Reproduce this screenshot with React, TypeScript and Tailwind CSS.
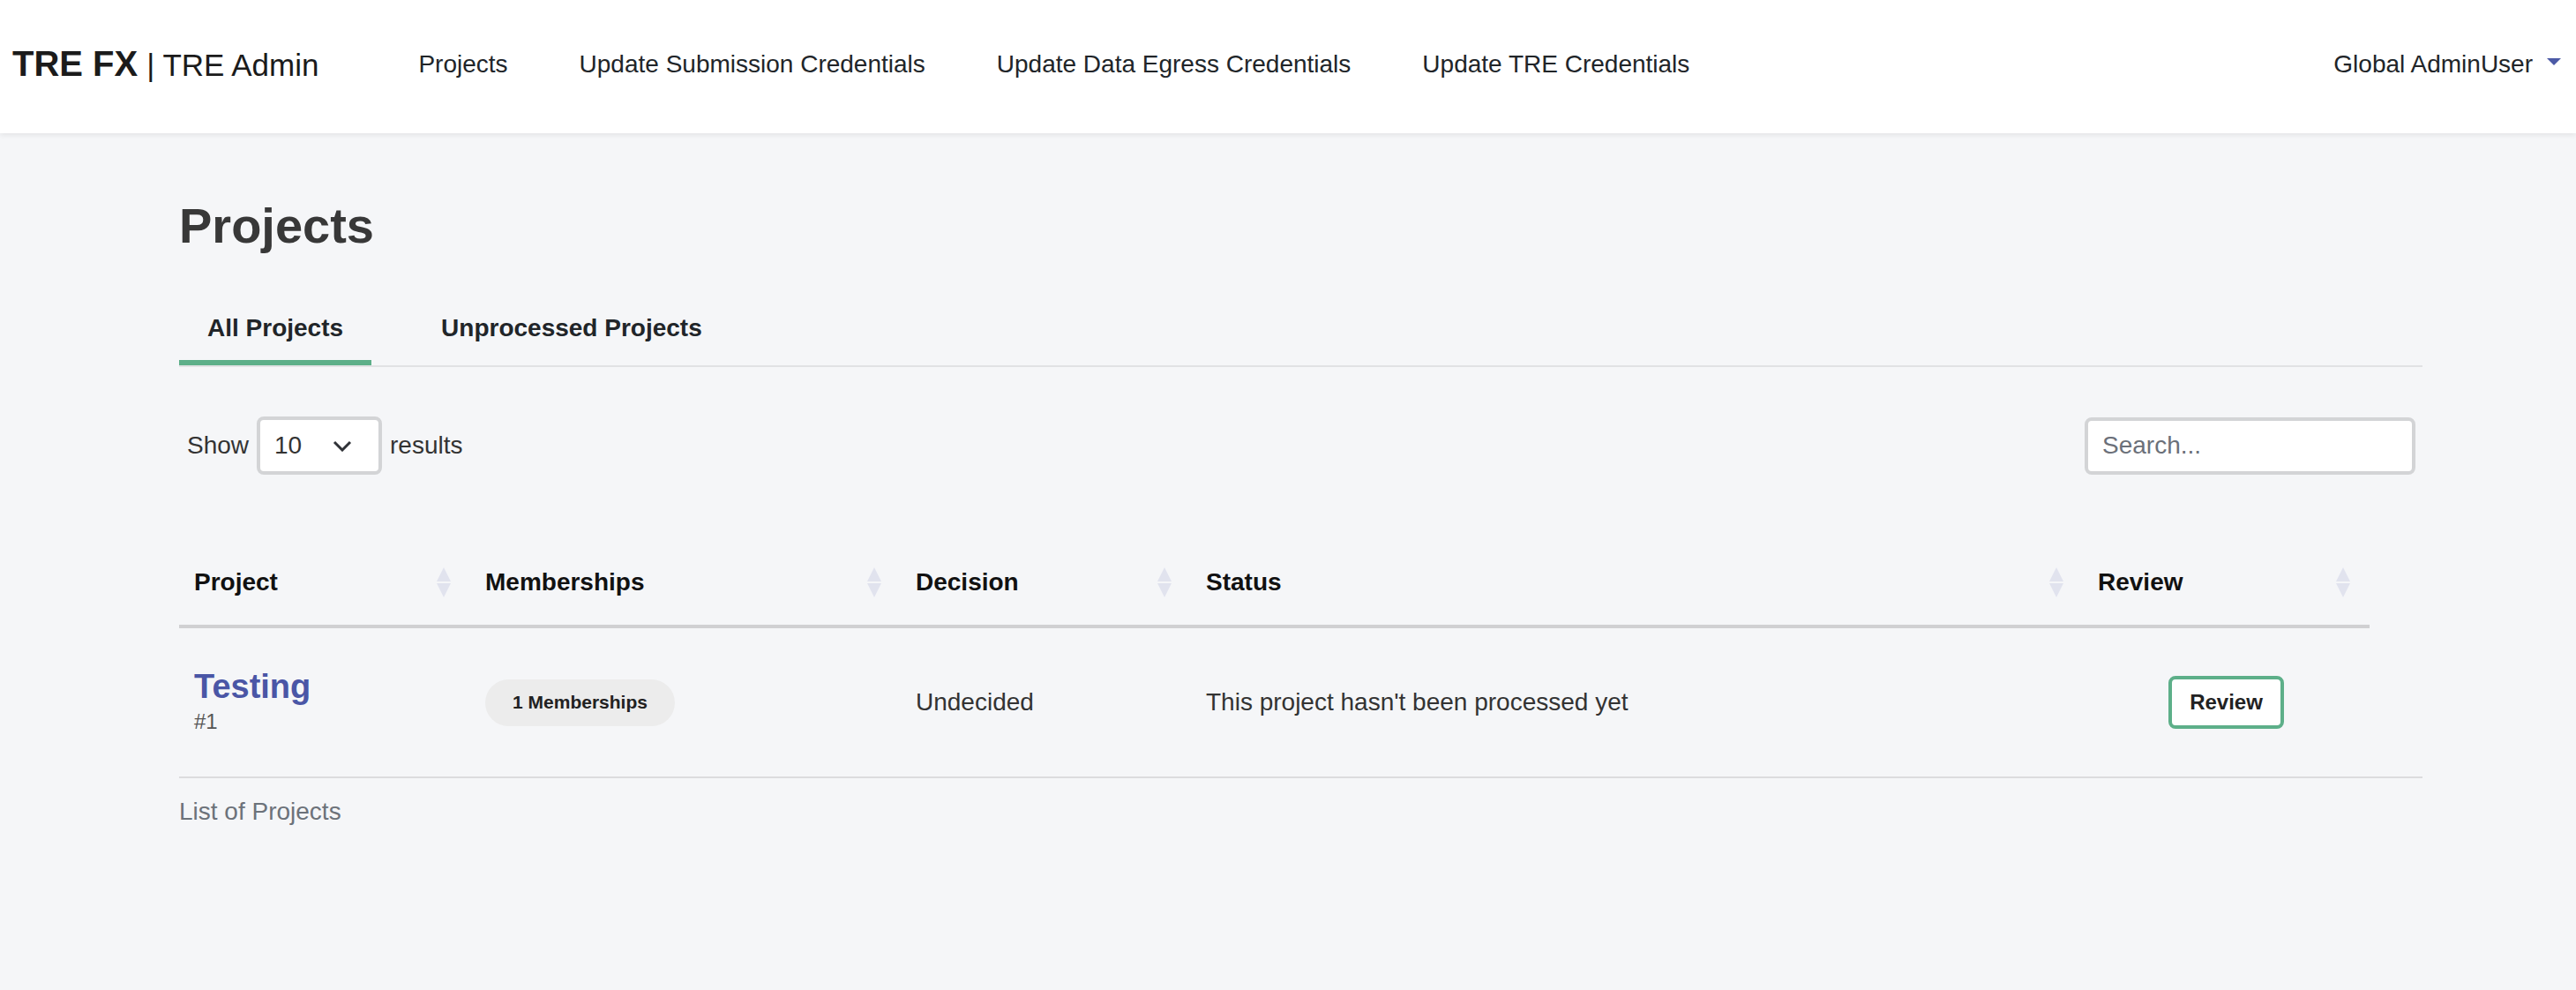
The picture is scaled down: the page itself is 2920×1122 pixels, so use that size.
import React from "react";

interface Row {
  id: number;
  name: string;
  memberships: number;
  decision: string;
  status: string;
}

const columns = [
  { label: "Project", width: "w-[330px]" },
  { label: "Memberships", width: "w-[488px]" },
  { label: "Decision", width: "w-[329px]" },
  { label: "Status", width: "w-[1011px]" },
  { label: "Review", width: "w-[325px]" },
];

const rows: Row[] = [
  {
    id: 1,
    name: "Testing",
    memberships: 1,
    decision: "Undecided",
    status: "This project hasn't been processed yet",
  },
];

const SortIcon: React.FC = () => (
  <svg width="16" height="34" viewBox="0 0 16 34" className="shrink-0">
    <polygon points="8,0 16,16 0,16" fill="#e1e3ee" />
    <polygon points="0,18 16,18 8,34" fill="#e1e3ee" />
  </svg>
);

const App: React.FC = () => {
  const navLinks = [
    "Projects",
    "Update Submission Credentials",
    "Update Data Egress Credentials",
    "Update TRE Credentials",
  ];

  return (
    <div className="min-h-screen bg-[#f5f6f8] font-['Liberation_Sans',Arial,sans-serif] text-[#212529]">
      {/* top bar */}
      <header className="h-[151px] bg-white shadow-[0_2px_6px_rgba(0,0,0,0.08)] flex items-center pb-[6px] pl-[14px] pr-[17px]">
        <div className="flex items-baseline leading-[48px] text-[#1b1b1b] whitespace-nowrap">
          <span className="text-[40px] font-bold">TRE FX</span>
          <span className="text-[35px] ml-[10px]">| TRE Admin</span>
        </div>
        <nav className="flex gap-[81px] ml-[113px] text-[28px] leading-[42px]">
          {navLinks.map((link) => (
            <a key={link} href="#" className="whitespace-nowrap">
              {link}
            </a>
          ))}
        </nav>
        <div className="ml-auto flex items-center text-[28px] leading-[42px]">
          <span>Global AdminUser</span>
          <svg width="16" height="8" viewBox="0 0 16 8" className="ml-[16px] mb-[6px]">
            <polygon points="0,0 16,0 8,8" fill="#4c5aa6" />
          </svg>
        </div>
      </header>

      <main className="pl-[203px] pr-[174px] pt-[77px]">
        <h1 className="text-[56px] leading-[56px] font-bold text-[#383838] mb-[51px]">Projects</h1>

        {/* tabs */}
        <div className="flex gap-[47px] border-b-2 border-[#e1e2e4]">
          <button className="px-[32px] pt-[16px] pb-[15px] text-[28px] leading-[42px] font-bold text-[#212529] border-b-[6px] border-[#5daf89]">
            All Projects
          </button>
          <button className="px-[32px] pt-[16px] pb-[15px] text-[28px] leading-[42px] font-bold text-[#212529] border-b-[6px] border-transparent">
            Unprocessed Projects
          </button>
        </div>

        {/* controls */}
        <div className="flex items-center justify-between mt-[56px] pl-[9px] pr-[8px]">
          <div className="flex items-center gap-[9px] text-[28px] leading-[42px] text-[#333]">
            <span>Show</span>
            <div className="w-[142px] h-[66px] bg-white border-[4px] border-[#d3d4d6] rounded-[8px] flex items-center justify-between pl-[16px] pr-[30px]">
              <span>10</span>
              <svg width="22" height="13" viewBox="0 0 22 13">
                <polyline points="2,2 11,11 20,2" fill="none" stroke="#2f3237" strokeWidth="3" />
              </svg>
            </div>
            <span>results</span>
          </div>
          <div className="w-[375px] h-[65px] bg-white border-[4px] border-[#d3d4d6] rounded-[8px] flex items-center pl-[16px] text-[28px] text-[#6b7079]">
            Search...
          </div>
        </div>

        {/* table */}
        <div className="mt-[74px] border-b-2 border-[#dcdcde]">
          <table className="table-fixed border-collapse w-[2483px]">
            <colgroup>
              {columns.map((c) => (
                <col key={c.label} className={c.width} />
              ))}
            </colgroup>
            <thead>
              <tr className="border-b-4 border-[#d0d0d2]">
                {columns.map((c) => (
                  <th key={c.label} className="pt-[27px] pb-[27px] pl-[17px] pr-[22px] text-left">
                    <div className="flex items-center justify-between text-[28px] leading-[42px] font-bold text-[#111]">
                      <span>{c.label}</span>
                      <SortIcon />
                    </div>
                  </th>
                ))}
              </tr>
            </thead>
            <tbody>
              {rows.map((r) => (
                <tr key={r.id} className="h-[170px]">
                  <td className="pl-[17px] align-middle">
                    <div className="text-[38px] leading-[44px] font-bold text-[#4a56a6]">{r.name}</div>
                    <div className="text-[24px] leading-[36px] text-[#555]">#{r.id}</div>
                  </td>
                  <td className="pl-[17px] align-middle">
                    <span className="inline-flex items-center justify-center w-[215px] h-[53px] rounded-full bg-[#ececec] text-[21px] font-bold text-[#222]">
                      {r.memberships} Memberships
                    </span>
                  </td>
                  <td className="pl-[17px] align-middle text-[28px] text-[#333]">{r.decision}</td>
                  <td className="pl-[17px] align-middle text-[28px] text-[#333]">{r.status}</td>
                  <td className="align-middle text-center">
                    <button className="w-[131px] h-[60px] bg-white border-[4px] border-[#5daf89] rounded-[8px] text-[24px] font-bold text-[#222]">
                      Review
                    </button>
                  </td>
                </tr>
              ))}
            </tbody>
          </table>
        </div>

        <p className="mt-[17px] text-[28px] leading-[42px] text-[#6c727a]">List of Projects</p>
      </main>
    </div>
  );
};

export default App;
